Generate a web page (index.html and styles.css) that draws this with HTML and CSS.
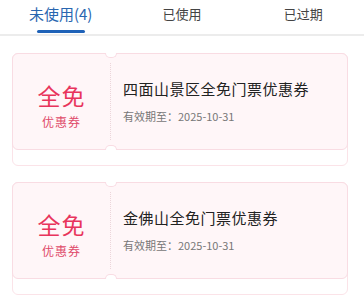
FILE: index.html
```html
<!DOCTYPE html>
<html>
<head>
<meta charset="utf-8">
<title>我的优惠券</title>
<link rel="stylesheet" href="styles.css">
</head>
<body>

<div class="tabs">
  <div class="tab active">未使用(4)</div>
  <div class="tab">已使用</div>
  <div class="tab">已过期</div>
</div>

<div class="list">
  <div class="card">
    <div class="coupon">
      <div class="left">
        <div class="big">全免</div>
        <div class="small">优惠券</div>
      </div>
      <div class="right">
        <div class="title">四面山景区全免门票优惠券</div>
        <div class="date">有效期至：2025-10-31</div>
      </div>
    </div>
  </div>

  <div class="card">
    <div class="coupon">
      <div class="left">
        <div class="big">全免</div>
        <div class="small">优惠券</div>
      </div>
      <div class="right">
        <div class="title">金佛山全免门票优惠券</div>
        <div class="date">有效期至：2025-10-31</div>
      </div>
    </div>
  </div>
</div>

</body>
</html>
```
FILE: styles.css
```css
body {margin:0; background:#fff; font-family:"Noto Sans CJK SC","Noto Sans",sans-serif; color:#333;}

.tabs {display:flex; height:34px; border-bottom:2px solid #ececec;}
.tab {position:relative; flex:1; text-align:center; font-size:13px; line-height:27px; color:#444;}
.tab.active {color:#2966b0; font-size:15px;}
.tab.active::after {content:""; position:absolute; left:50%; bottom:1px; width:48px; margin-left:-24px; height:3px; border-radius:2px; background:#1f62b8;}

.list {display:flex; flex-direction:column; gap:16px; padding:17px 16px 0 12px;}

.card {height:111px; border:1px solid #fbe3e8; border-radius:6px; background:#fff;}
.coupon {position:relative; display:flex; height:95px; margin:-1px -1px 0 -1px; border:1px solid #f9dce3; border-radius:6px; background:#fff6f8;}
.coupon::before, .coupon::after {content:""; position:absolute; left:92px; width:10px; height:4px; background:#fff; border:1px solid #f9dce3;}
.coupon::before {top:-1px; border-top:none; border-radius:0 0 6px 6px;}
.coupon::after {bottom:-1px; border-bottom:none; border-radius:6px 6px 0 0;}

.left {width:97px; border-right:1px dotted #ecd5da; margin:9px 0; padding-top:18px; display:flex; flex-direction:column; align-items:center;}
.big {font-size:23px; line-height:28px; color:#e8345c; letter-spacing:1px;}
.small {font-size:12px; line-height:18px; color:#e04a6a; letter-spacing:1px; margin-top:4px;}

.right {flex:1; padding:24px 0 0 12px;}
.title {font-size:15px; line-height:22px; color:#222; letter-spacing:0.5px;}
.date {font-size:11px; line-height:16px; color:#777; margin-top:8px;}
```
